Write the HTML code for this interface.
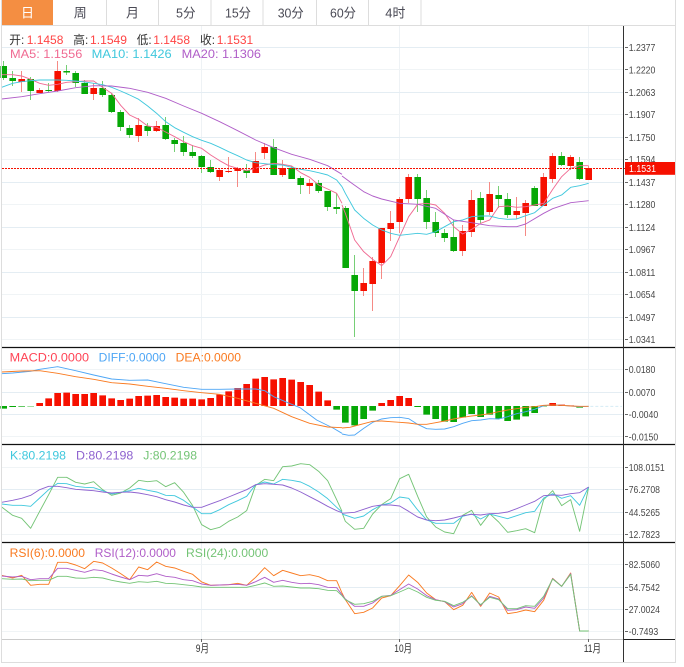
<!DOCTYPE html>
<html><head><meta charset="utf-8"><style>
html,body{margin:0;padding:0;background:#fff;width:684px;height:667px;overflow:hidden}
svg{display:block}
text{font-family:"Liberation Sans","Noto Sans CJK SC",sans-serif}
.l{font-size:12.5px}
.a{font-size:10px;fill:#484848}
.t{font-size:13px;fill:#4a4a55}
polyline{fill:none;stroke-width:2.8;stroke-linejoin:round}
</style></head><body>
<svg width="684" height="667" viewBox="0 0 684 667" xmlns="http://www.w3.org/2000/svg">
<rect width="684" height="667" fill="#fff"/>
<!-- vertical grid -->
<path d="M201.5 26V639M399.5 26V639M588.5 26V639" stroke="#eef2f5" fill="none"/>
<!-- horizontal grid -->
<path d="M2 47.5H623M2 92.5H623M2 137.5H623M2 182.5H623M2 227.5H623M2 272.5H623M2 317.5H623M2 392.5H623M2 414.5H623M2 489.5H623M2 512.5H623M2 587.5H623M2 609.5H623" stroke="#e4edf3" fill="none"/>
<path d="M2 69.5H623M2 114.5H623M2 159.5H623M2 204.5H623M2 249.5H623M2 294.5H623M2 339.5H623M2 369.5H623M2 436.5H623M2 467.5H623M2 534.5H623M2 564.5H623M2 631.5H623" stroke="#f0f4f6" fill="none"/>
<!-- candles -->
<path fill="none" stroke="#76cf76" d="M3.5 61V80M12.5 71V86M30.5 77V100M48.5 83V92M66.5 65V75M75.5 71V87M84.5 80V94M102.5 81V97M111.5 93V113M120.5 110V131M129.5 125V138M147.5 123V136M165.5 117V140M174.5 138V152M183.5 136V156M192.5 145V158M201.5 155V173M210.5 160V173M246.5 164V178M273.5 139V175M291.5 166V179M300.5 176V194M318.5 180V193M327.5 191V211M336.5 193V214M345.5 206V268M354.5 255V337M417.5 174V212M426.5 190V229M435.5 212V237M444.5 229V242M453.5 220V252M480.5 192V223M498.5 186V208M507.5 193V218M534.5 186V206M561.5 152V166M579.5 157V180"/>
<path fill="none" stroke="#f58a85" d="M21.5 71V92M39.5 88V93M57.5 61V92M93.5 83V100M138.5 118V142M156.5 121V132M219.5 168V181M228.5 157V173M237.5 167V187M255.5 152V173M264.5 143V159M282.5 160V177M309.5 179V194M363.5 268V296M372.5 257V311M381.5 228V279M390.5 211V241M399.5 197V233M408.5 174V203M462.5 225V256M471.5 190V237M489.5 182V215M516.5 197V219M525.5 200V236M543.5 173V206M552.5 153V183M570.5 155V170M588.5 166V180"/>
<path fill="none" stroke="#06a806" stroke-width="6.6" d="M3.7 66V78M12.7 78V81M30.7 79V91M48.7 90V91M66.7 71V72.5M75.7 73V83M84.7 83V94M102.7 88V95M111.7 95V112M120.7 112V127M129.7 128V135M147.7 126V131M165.7 125V139M174.7 140V144M183.7 143V152M192.7 152V156M201.7 156V167M210.7 167V172M246.7 170.5V173M273.7 147V175M291.7 168V179M300.7 178V185M318.7 183V191M327.7 191V207M336.7 207V209M345.7 208V268M354.7 275V291M417.7 177V199M426.7 198V222M435.7 222V233M444.7 233V238M453.7 237V251M480.7 198V220M498.7 195V199M507.7 199V215M534.7 188V206M561.7 156V165M579.7 162V179"/>
<path fill="none" stroke="#f61000" stroke-width="6.6" d="M21.7 79V82M39.7 90V93M57.7 71V91M93.7 88V94M138.7 125V136M156.7 126V131M219.7 170V177M228.7 171V172M237.7 168V171M255.7 161V173M264.7 147V153M282.7 168V175M309.7 183V186M363.7 283V291M372.7 261V284M381.7 228V263M390.7 223V229M399.7 199V222M408.7 177V199M462.7 231V251M471.7 200V232M489.7 194V212M516.7 211V215M525.7 203V213M543.7 177V206M552.7 156V179M570.7 157V166M588.7 168V180"/>
<!-- main MA lines -->
<g transform="scale(.33333)">
<polyline stroke="#f06a92" points="5,224 38,224 65,228 92,238 119,250 146,256 173,253 200,247 227,245 254,243 281,243 308,262 335,280 362,316 389,345 416,358 443,378 470,382 497,396 524,410 551,425 578,437 605,445 632,465 659,482 686,497 713,505 740,512 767,505 794,495 821,490 848,493 875,498 902,518 929,532 956,555 983,567 1010,580 1026,610"/>
<polyline stroke="#40c8dd" points="5,262 38,250 65,245 92,242 119,240 146,240 173,240 200,241 227,243 254,246 281,250 308,254 335,262 362,273 389,285 416,298 443,318 470,340 497,365 524,383 551,397 578,410 605,421 632,430 659,442 686,455 713,467 740,480 767,488 794,491 821,494 848,495 875,502 902,508 929,512 956,518 983,525 1010,540 1026,560"/>
<polyline stroke="#b05ec8" points="5,297 65,290 119,281 173,273 227,263 281,257 335,258 389,265 443,277 497,295 551,318 605,340 659,365 713,392 767,420 821,443 875,463 929,478 983,497 1026,523"/>
</g>
<g transform="translate(342,170) scale(.33333)">
<polyline stroke="#f06a92" points="0,105 10,130 38,210 65,245 92,268 119,287 146,260 173,200 200,140 227,103 254,100 281,105 308,130 335,170 362,192 389,178 416,160 443,150 470,110 497,108 524,112 551,110 578,105 605,100 632,58 659,20 686,-5 713,-13 740,-13"/>
<polyline stroke="#40c8dd" points="0,50 10,70 38,120 65,145 92,165 119,180 146,190 173,196 200,193 227,190 254,193 281,185 308,170 335,155 362,150 389,140 416,138 443,138 470,145 497,148 524,147 551,137 578,128 605,105 632,85 659,75 686,52 713,47 740,40"/>
<polyline stroke="#b05ec8" points="0,18 30,40 65,65 92,78 119,87 173,100 227,103 281,115 335,150 389,158 443,167 497,170 524,170 551,162 605,130 632,116 686,98 740,92"/>
</g>
<!-- current price -->
<path d="M2 168.5H625" stroke="#f61000" stroke-dasharray="2 1" fill="none"/>
<!-- MACD -->
<g transform="translate(0,345) scale(.33333)">
<path fill="none" stroke="#f61000" stroke-width="20" d="M119 183V174M146 183V160M173 183V144M200 183V143M227 183V147M254 183V147M281 183V144M308 183V151M335 183V160M362 183V165M389 183V161M416 183V153M443 183V152M470 183V150M497 183V156M524 183V158M551 183V161M578 183V161M605 183V163M632 183V159M659 183V149M686 183V139M713 183V129M740 183V117M767 183V101M794 183V96M821 183V103M848 183V99M875 183V104M902 183V111M929 183V120M956 183V140M983 183V166"/>
<path fill="none" stroke="#06a806" stroke-width="20" d="M11 183V191M38 183V186M65 183V185M92 183V184M1010 183V194"/>
<polyline stroke="#4ea6f5" points="5,86 38,84 92,79 119,73 173,65 227,77 281,90 335,102 389,106 443,105 497,116 551,127 605,133 659,133 713,132 767,132 794,137 821,155 875,178 900,188 950,225 999,249 1026,265"/>
<polyline stroke="#f97a20" points="5,81 65,78 119,77 173,85 227,95 281,103 335,113 389,117 443,124 497,130 551,137 605,143 659,148 713,160 767,175 821,190 875,215 929,235 983,246 1026,248"/>
</g>
<g transform="translate(342,345) scale(.33333)">
<path fill="none" stroke="#06a806" stroke-width="20" d="M10 183V233M38 183V241M65 183V222M92 183V197M227 183V186M254 183V209M281 183V222M308 183V230M335 183V231M362 183V217M389 183V207M416 183V216M443 183V209M470 183V221M497 183V228M524 183V224M551 183V214M578 183V204M605 183V184M713 183V188"/>
<path fill="none" stroke="#f61000" stroke-width="20" d="M119 183V174M146 183V165M173 183V153M200 183V159M632 183V174M659 183V179M686 183V181"/>
<polyline stroke="#4ea6f5" points="0,267 20,271 38,270 65,250 92,232 119,222 146,218 173,217 200,221 227,238 254,251 281,253 308,252 335,245 362,235 389,227 416,225 443,221 470,222 497,215 524,206 551,200 578,193 605,182 632,180 659,181 686,183 713,185 740,184"/>
<polyline stroke="#f97a20" points="0,249 24,247 38,243 65,236 92,229 119,228 146,230 173,232 200,234 227,238 254,238 281,233 308,228 335,222 362,217 389,213 416,210 443,206 470,200 497,195 524,191 551,187 578,185 605,181 632,180 659,181 686,183 713,184 740,184"/>
<path d="M745 184H840" stroke="#d5ecf5" stroke-width="3" stroke-dasharray="9 6" fill="none"/>
</g>
<!-- KDJ -->
<g transform="translate(0,443) scale(.33333)">
<polyline stroke="#74c476" points="5,192 38,217 65,226 92,256 119,205 146,155 173,103 200,103 227,118 254,123 281,116 308,140 335,157 362,150 389,135 416,112 443,116 470,113 497,131 524,119 551,148 578,188 605,245 632,260 659,253 686,235 713,222 740,203 767,127 794,109 821,113 848,71 875,69 902,62 929,65 956,85 983,113 1010,170 1026,205"/>
<polyline stroke="#40c8dd" points="5,183 38,187 65,187 92,190 119,165 146,140 173,121 200,122 227,130 254,133 281,134 308,143 335,153 362,148 389,143 416,136 443,142 470,147 497,157 524,158 551,172 578,192 605,212 632,212 659,200 686,185 713,173 740,160 767,125 794,117 821,123 848,109 875,112 902,117 929,130 956,147 983,167 1010,193 1026,207"/>
<polyline stroke="#8e62cf" points="5,178 38,172 65,166 92,157 119,140 146,130 173,130 200,134 227,139 254,141 281,143 308,147 335,150 362,148 389,147 416,150 443,155 470,161 497,170 524,177 551,186 578,193 605,193 632,183 659,173 686,162 713,151 740,140 767,125 794,122 821,124 848,126 875,135 902,147 929,161 956,175 983,190 1010,203 1026,209"/>
</g>
<g transform="translate(342,443) scale(.33333)">
<polyline stroke="#74c476" points="0,209 10,235 38,259 65,256 92,213 119,185 146,167 173,107 200,94 227,160 254,222 281,252 308,267 335,272 362,217 389,202 416,247 443,212 470,237 497,268 524,263 551,257 578,269 605,170 632,143 659,188 686,170 713,265 740,132"/>
<polyline stroke="#40c8dd" points="0,213 38,226 65,219 92,200 119,186 146,180 173,162 200,166 227,201 254,231 281,241 308,241 335,241 362,220 389,213 416,228 443,213 470,220 497,227 524,218 551,209 578,205 605,165 632,152 659,166 686,158 713,187 740,132"/>
<polyline stroke="#8e62cf" points="0,211 38,208 65,199 92,190 119,186 146,186 173,189 200,205 227,222 254,231 281,233 308,231 335,225 362,218 389,214 416,216 443,212 470,211 497,207 524,197 551,186 578,175 605,158 632,156 659,157 686,152 713,149 740,132"/>
</g>
<!-- RSI -->
<g transform="translate(0,543) scale(.33333)">
<polyline stroke="#f97a20" points="5,97 38,105 65,97 92,127 119,124 146,124 173,58 200,58 227,66 254,77 281,55 308,60 335,75 362,92 389,110 416,72 443,80 470,57 497,70 524,75 551,85 578,94 605,117 632,127 659,126 686,125 713,121 740,127 767,103 794,74 821,98 848,82 875,90 902,98 929,95 956,101 983,113 1010,113 1026,150"/>
<polyline stroke="#b05ec8" points="5,99 38,102 65,100 92,110 119,107 146,107 173,76 200,76 227,82 254,88 281,80 308,83 335,93 362,102 389,110 416,97 443,99 470,92 497,100 524,103 551,110 578,113 605,123 632,127 659,126 686,125 713,124 740,127 767,116 794,103 821,118 848,112 875,118 902,122 929,121 956,125 983,133 1010,134 1026,155"/>
<polyline stroke="#74c476" points="5,107 38,109 65,108 92,113 119,112 146,112 173,100 200,100 227,105 254,106 281,103 308,105 335,112 362,117 389,121 416,116 443,118 470,115 497,121 524,122 551,125 578,128 605,132 632,133 659,133 686,133 713,133 740,133 767,127 794,120 821,130 848,129 875,132 902,135 929,135 956,137 983,142 1010,143 1026,158"/>
</g>
<g transform="translate(342,543) scale(.33333)">
<polyline stroke="#f97a20" points="0,150 10,170 38,212 65,208 92,195 119,165 146,158 173,128 200,96 227,118 254,150 281,170 308,176 335,200 362,187 389,148 416,190 443,150 470,162 497,212 524,208 551,201 578,206 605,172 632,106 659,130 686,90 713,264 740,264"/>
<polyline stroke="#b05ec8" points="0,155 10,168 38,190 65,190 92,180 119,160 146,157 173,140 200,123 227,138 254,158 281,170 308,176 335,192 362,182 389,158 416,187 443,160 470,168 497,202 524,200 551,192 578,196 605,165 632,107 659,130 686,92 713,264 740,264"/>
<polyline stroke="#74c476" points="0,158 10,170 38,184 65,182 92,175 119,160 146,158 173,147 200,135 227,147 254,163 281,172 308,175 335,188 362,178 389,160 416,185 443,163 470,170 497,197 524,197 551,188 578,190 605,160 632,108 659,130 686,94 713,264 740,264"/>
</g>
<!-- frame & axes -->
<path d="M2 347.5H675M2 444.5H675M2 542.5H675" stroke="#111" stroke-width="1.2" fill="none"/>
<path d="M2 639.5H623" stroke="#ccc" fill="none"/>
<path d="M623 639.5H675" stroke="#222" fill="none"/>
<path d="M623.5 26V662" stroke="#333" fill="none"/>
<path d="M1.5 0V662.5H675.5V0M2 25.5H675" stroke="#ddd" fill="none"/>
<path d="M106.5 0V25M158.5 0V25M211 0V25M263 0V25M316.5 0V25M368.5 0V25M421 0V25" stroke="#ddd" fill="none"/>
<path d="M625 47.5h3M625 69.5h3M625 92.5h3M625 114.5h3M625 137.5h3M625 159.5h3M625 182.5h3M625 204.5h3M625 227.5h3M625 249.5h3M625 272.5h3M625 294.5h3M625 317.5h3M625 339.5h3M625 369.5h3M625 392.5h3M625 414.5h3M625 436.5h3M625 467.5h3M625 489.5h3M625 512.5h3M625 534.5h3M625 564.5h3M625 587.5h3M625 609.5h3M625 631.5h3M201.5 639v3M399.5 639v3M588.5 639v3" stroke="#666" fill="none"/>
<!-- tabs -->
<rect x="2" y="0" width="51" height="25" fill="#f48e42"/>
<text class="t" x="27.5" y="17.5" text-anchor="middle" style="fill:#fff">日</text>
<text class="t" x="80.3" y="17.5" text-anchor="middle">周</text>
<text class="t" x="132.5" y="17.5" text-anchor="middle">月</text>
<text class="t" x="176" y="17.5" textLength="19.5" lengthAdjust="spacingAndGlyphs">5分</text>
<text class="t" x="225" y="17.5" textLength="26" lengthAdjust="spacingAndGlyphs">15分</text>
<text class="t" x="277.7" y="17.5" textLength="26" lengthAdjust="spacingAndGlyphs">30分</text>
<text class="t" x="330" y="17.5" textLength="26" lengthAdjust="spacingAndGlyphs">60分</text>
<text class="t" x="385.3" y="17.5" textLength="20" lengthAdjust="spacingAndGlyphs">4时</text>
<!-- legend -->
<g class="l" style="font-size:12px">
<text x="9.3" y="44" fill="#333" textLength="15" lengthAdjust="spacingAndGlyphs">开:</text>
<text x="26.7" y="44" fill="#f44" textLength="36.7" lengthAdjust="spacingAndGlyphs">1.1458</text>
<text x="73.3" y="44" fill="#333" textLength="15" lengthAdjust="spacingAndGlyphs">高:</text>
<text x="90" y="44" fill="#f44" textLength="37" lengthAdjust="spacingAndGlyphs">1.1549</text>
<text x="136.7" y="44" fill="#333" textLength="15" lengthAdjust="spacingAndGlyphs">低:</text>
<text x="153.3" y="44" fill="#f44" textLength="36.7" lengthAdjust="spacingAndGlyphs">1.1458</text>
<text x="200" y="44" fill="#333" textLength="15" lengthAdjust="spacingAndGlyphs">收:</text>
<text x="216.7" y="44" fill="#f44" textLength="36.5" lengthAdjust="spacingAndGlyphs">1.1531</text>
<text x="10" y="58" fill="#f06a92" textLength="72.3" lengthAdjust="spacingAndGlyphs">MA5: 1.1556</text>
<text x="91.7" y="58" fill="#40c8dd" textLength="80" lengthAdjust="spacingAndGlyphs">MA10: 1.1426</text>
<text x="181.7" y="58" fill="#b05ec8" textLength="79.3" lengthAdjust="spacingAndGlyphs">MA20: 1.1306</text>
<text x="9.7" y="361.5" fill="#f45" textLength="79.3" lengthAdjust="spacingAndGlyphs">MACD:0.0000</text>
<text x="98.7" y="361.5" fill="#4ea6f5" textLength="67" lengthAdjust="spacingAndGlyphs">DIFF:0.0000</text>
<text x="175.7" y="361.5" fill="#f97a20" textLength="65.3" lengthAdjust="spacingAndGlyphs">DEA:0.0000</text>
<text x="10" y="459.5" fill="#40c8dd" textLength="56" lengthAdjust="spacingAndGlyphs">K:80.2198</text>
<text x="76" y="459.5" fill="#8e62cf" textLength="57.3" lengthAdjust="spacingAndGlyphs">D:80.2198</text>
<text x="143.3" y="459.5" fill="#74c476" textLength="53.7" lengthAdjust="spacingAndGlyphs">J:80.2198</text>
<text x="9.7" y="557" fill="#f97a20" textLength="75.3" lengthAdjust="spacingAndGlyphs">RSI(6):0.0000</text>
<text x="94.7" y="557" fill="#b05ec8" textLength="81.3" lengthAdjust="spacingAndGlyphs">RSI(12):0.0000</text>
<text x="186" y="557" fill="#74c476" textLength="82.3" lengthAdjust="spacingAndGlyphs">RSI(24):0.0000</text>
</g>
<!-- axis labels -->
<g class="a">
<text x="628.7" y="50.8" textLength="26.7" lengthAdjust="spacingAndGlyphs">1.2377</text>
<text x="628.7" y="73.3" textLength="26.7" lengthAdjust="spacingAndGlyphs">1.2220</text>
<text x="628.7" y="95.8" textLength="26.7" lengthAdjust="spacingAndGlyphs">1.2063</text>
<text x="628.7" y="118" textLength="26.7" lengthAdjust="spacingAndGlyphs">1.1907</text>
<text x="628.7" y="140.8" textLength="26.7" lengthAdjust="spacingAndGlyphs">1.1750</text>
<text x="628.7" y="163" textLength="26.7" lengthAdjust="spacingAndGlyphs">1.1594</text>
<text x="628.7" y="185.8" textLength="26.7" lengthAdjust="spacingAndGlyphs">1.1437</text>
<text x="628.7" y="208" textLength="26.7" lengthAdjust="spacingAndGlyphs">1.1280</text>
<text x="628.7" y="230.8" textLength="26.7" lengthAdjust="spacingAndGlyphs">1.1124</text>
<text x="628.7" y="253" textLength="26.7" lengthAdjust="spacingAndGlyphs">1.0967</text>
<text x="628.7" y="275.8" textLength="26.7" lengthAdjust="spacingAndGlyphs">1.0811</text>
<text x="628.7" y="298" textLength="26.7" lengthAdjust="spacingAndGlyphs">1.0654</text>
<text x="628.7" y="320.8" textLength="26.7" lengthAdjust="spacingAndGlyphs">1.0497</text>
<text x="628.7" y="343" textLength="26.7" lengthAdjust="spacingAndGlyphs">1.0341</text>
<text x="628.7" y="373" textLength="26.7" lengthAdjust="spacingAndGlyphs">0.0180</text>
<text x="628.7" y="395.8" textLength="26.7" lengthAdjust="spacingAndGlyphs">0.0070</text>
<text x="628.7" y="418" textLength="29.5" lengthAdjust="spacingAndGlyphs">-0.0040</text>
<text x="628.7" y="440.5" textLength="29.5" lengthAdjust="spacingAndGlyphs">-0.0150</text>
<text x="628.7" y="471" textLength="36" lengthAdjust="spacingAndGlyphs">108.0151</text>
<text x="628.7" y="493" textLength="31.3" lengthAdjust="spacingAndGlyphs">76.2708</text>
<text x="628.7" y="515.8" textLength="31.3" lengthAdjust="spacingAndGlyphs">44.5265</text>
<text x="628.7" y="538" textLength="31.3" lengthAdjust="spacingAndGlyphs">12.7823</text>
<text x="628.7" y="568" textLength="31.3" lengthAdjust="spacingAndGlyphs">82.5060</text>
<text x="628.7" y="590.8" textLength="31.3" lengthAdjust="spacingAndGlyphs">54.7542</text>
<text x="628.7" y="613" textLength="31.3" lengthAdjust="spacingAndGlyphs">27.0024</text>
<text x="628.7" y="635" textLength="29.5" lengthAdjust="spacingAndGlyphs">-0.7493</text>
</g>
<rect x="625" y="162" width="50" height="12.8" fill="#f61000"/>
<text x="629" y="172" font-size="10" fill="#fff" textLength="27" lengthAdjust="spacingAndGlyphs">1.1531</text>
<g font-size="11" fill="#333">
<text x="195.7" y="652" textLength="13.3" lengthAdjust="spacingAndGlyphs">9月</text>
<text x="394.3" y="652" textLength="17.7" lengthAdjust="spacingAndGlyphs">10月</text>
<text x="583.7" y="652" textLength="17.3" lengthAdjust="spacingAndGlyphs">11月</text>
</g>
</svg>
</body></html>
